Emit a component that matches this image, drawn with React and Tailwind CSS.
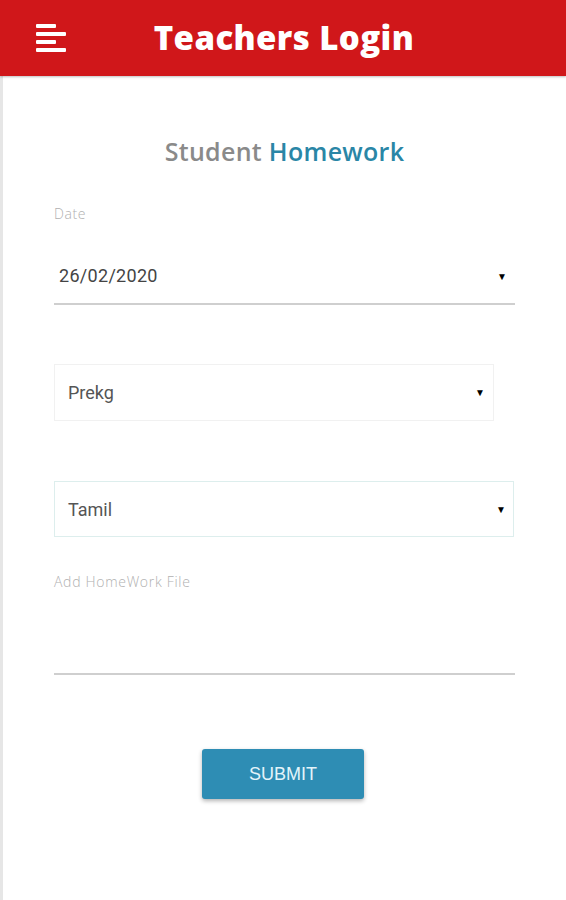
export default function App() {
  return (
    <div className="w-[566px] h-[900px] bg-white flex flex-col overflow-hidden" style={{ fontFamily: "'Open Sans', sans-serif" }}>
      <header className="h-[76px] bg-[#d0171a] flex items-center relative shrink-0 shadow-[0_1px_2px_rgba(0,0,0,0.25)]">
        <div className="absolute left-[36px] top-[24px] flex flex-col gap-[4px]">
          <div className="w-[20px] h-[4px] bg-white rounded-[1px]" />
          <div className="w-[30px] h-[4px] bg-white rounded-[1px]" />
          <div className="w-[20px] h-[4px] bg-white rounded-[1px]" />
          <div className="w-[30px] h-[4px] bg-white rounded-[1px]" />
        </div>
        <h1 className="w-full text-center text-white text-[33px] font-extrabold tracking-[0.4px] pl-[2px]" style={{ fontFamily: "'Open Sans', sans-serif" }}>
          Teachers Login
        </h1>
      </header>
      <div className="flex-1 border-l-[3px] border-[#e6e6e6] flex flex-col">
        <h2 className="mt-[59px] text-center text-[25px] font-semibold leading-[32px] tracking-[0.3px]" style={{ fontFamily: "'Open Sans', sans-serif" }}>
          <span className="text-[#8a8a8a]">Student </span>
          <span className="text-[#2a86a6]">Homework</span>
        </h2>
        <div className="mx-[51px] mt-[38px]">
          <div className="text-[14px] font-light text-[#b0b0b0] leading-[18px] tracking-[0.6px]" style={{ fontFamily: "'Open Sans', sans-serif" }}>Date</div>
          <div className="mt-[41px] flex items-center justify-between pl-[5px] pr-[8px] pb-[15px] border-b-2 border-[#cfcfcf]" style={{ fontFamily: "Roboto, sans-serif" }}>
            <span className="text-[18px] text-[#444] leading-[24px] tracking-[0.3px]">26/02/2020</span>
            <span className="text-[10px] text-black">▼</span>
          </div>
          <div className="mt-[59px] w-[440px] h-[57px] border border-[#f1f1f1] flex items-center justify-between pl-[13px] pr-[8px]" style={{ fontFamily: "Roboto, sans-serif" }}>
            <span className="text-[18px] text-[#555]">Prekg</span>
            <span className="text-[10px] text-black">▼</span>
          </div>
          <div className="mt-[60px] w-[460px] h-[56px] border border-[#ddeeed] flex items-center justify-between pl-[13px] pr-[7px]" style={{ fontFamily: "Roboto, sans-serif" }}>
            <span className="text-[18px] text-[#555]">Tamil</span>
            <span className="text-[10px] text-black">▼</span>
          </div>
          <div className="mt-[36px] text-[14px] font-light text-[#b0b0b0] leading-[18px] tracking-[0.7px]" style={{ fontFamily: "'Open Sans', sans-serif" }}>Add HomeWork File</div>
          <div className="mt-[82px] border-b-2 border-[#cfcfcf]" />
        </div>
        <div className="flex justify-center mt-[74px] pr-[3px]">
          <button className="w-[162px] h-[50px] bg-[#2e8db4] rounded-[3px] text-[#e3f4fa] text-[18px] shadow-[0_2px_4px_rgba(0,0,0,0.3)]" style={{ fontFamily: "'Liberation Sans', Arial, sans-serif" }}>
            SUBMIT
          </button>
        </div>
      </div>
    </div>
  );
}
